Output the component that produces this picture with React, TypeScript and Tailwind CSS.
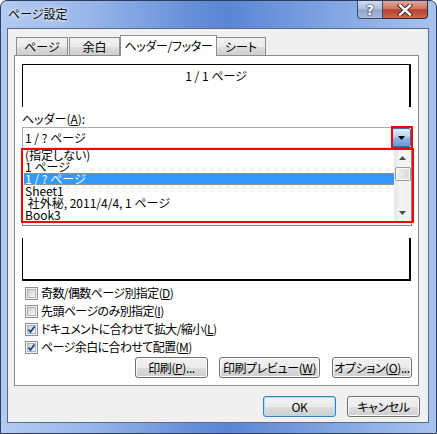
import React from "react";

const F = "font-['Noto_Sans_CJK_JP',sans-serif] [font-feature-settings:'palt']";

const U = ({ c }: { c: string }) => (
  <span className="underline underline-offset-[1px] decoration-[1px]">{c}</span>
);

function Btn({ className, children, focus }: { className: string; children: React.ReactNode; focus?: boolean }) {
  return (
    <div
      className={
        "h-[21px] rounded-[3px] border flex items-center justify-center whitespace-nowrap text-[12px] leading-[12px] tracking-[-0.4px] text-black " +
        (focus
          ? "border-[#3c7fb1] shadow-[inset_0_0_0_1px_#9ee6fb] "
          : "border-[#707070] shadow-[inset_0_0_0_1px_#fbfbfb] ") +
        "bg-[linear-gradient(to_bottom,#f3f3f3_0%,#ebebeb_50%,#dddddd_51%,#cfcfcf_100%)] " +
        className
      }
    >
      {children}
    </div>
  );
}

function Check({ checked, children }: { checked?: boolean; children: React.ReactNode }) {
  return (
    <div className="h-[18px] flex items-center pl-[3px]">
      <div className="w-[13px] h-[13px] border border-[#8e8f8f] bg-[#f4f4f4] flex items-center justify-center">
        <div className="w-[9px] h-[9px] border border-[#b0b4ba] bg-[linear-gradient(135deg,#c8ccd2_0%,#e6e8eb_60%,#fafafa_100%)] relative">
          {checked && (
            <svg width="11" height="11" viewBox="0 0 11 11" className="absolute left-[-2px] top-[-2px]">
              <path d="M2.5 5.5 L4.5 8 L8.5 2.5" stroke="#21409a" strokeWidth="1.8" fill="none" />
            </svg>
          )}
        </div>
      </div>
      <span className="ml-[3px] text-[12px] leading-[12px] tracking-[-0.6px] whitespace-nowrap text-black">{children}</span>
    </div>
  );
}

function Tri({ up, color = "#4a4a4a" }: { up?: boolean; color?: string }) {
  return (
    <svg width="7" height="4" viewBox="0 0 7 4">
      {up ? <path d="M0 4 L3.5 0 L7 4 Z" fill={color} /> : <path d="M0 0 L7 0 L3.5 4 Z" fill={color} />}
    </svg>
  );
}

const items = ["(指定しない)", "1 ページ", "1 / ? ページ", "Sheet1", " 社外秘, 2011/4/4, 1 ページ", "Book3"];

export default function App() {
  return (
    <div className={F + " w-[437px] h-[434px] overflow-hidden bg-white"}>
      <div className="w-[437px] h-[434px] rounded-t-[7px] border border-[#2d3d5e] bg-[linear-gradient(to_right,#b3cbf1_0%,#98b6ea_20%,#6a92db_42%,#5a86d6_52%,#7fa3e3_75%,#a9c3ef_100%)] flex flex-col pl-[6px] pr-[7px] pb-[10px]">
        {/* title bar */}
        <div className="h-[27px] flex justify-between items-start">
          <div className="pt-[7px] pl-[1px] text-[12px] leading-[12px] text-black [text-shadow:0_0_6px_#ffffff,0_0_3px_#ffffff]">
            ページ設定
          </div>
          <div className="flex mr-[1px] h-[18px]">
            <div className="w-[26px] h-[18px] rounded-bl-[4px] border border-t-0 border-[#3a4a6a] bg-[linear-gradient(to_bottom,#d0dcef_0%,#adbfdc_48%,#8ea5cb_52%,#a6badb_100%)] flex items-center justify-center">
              <span className="text-[14px] leading-[14px] font-bold text-white font-['DejaVu_Sans',sans-serif] [text-shadow:0_0_1px_#2a3550,0_0_1px_#2a3550,0_0_2px_#2a3550]">?</span>
            </div>
            <div className="w-[45px] h-[18px] rounded-br-[4px] border border-t-0 border-l-0 border-[#3a2a2a] bg-[linear-gradient(to_bottom,#e3a79a_0%,#cf7462_45%,#b8402c_52%,#c86a52_100%)] flex items-center justify-center">
              <svg width="16" height="12" viewBox="0 0 16 12">
                <path d="M3 1.5 L13 10.5 M13 1.5 L3 10.5" stroke="#3b2020" strokeWidth="4.2" strokeLinecap="square" />
                <path d="M3 1.5 L13 10.5 M13 1.5 L3 10.5" stroke="#ffffff" strokeWidth="2.4" strokeLinecap="square" />
              </svg>
            </div>
          </div>
        </div>

        {/* client area */}
        <div className="flex-1 border border-[#5b6b8c] bg-[#f0f0f0] flex flex-col pt-[6px]">
          {/* tabs */}
          <div className="ml-[6px] mr-[9px] flex flex-col">
            <div className="h-[20px] flex items-end pl-[2px] text-[12px] leading-[12px] text-black">
              <div className="w-[52px] h-[18px] border border-b-0 border-[#898c95] bg-[linear-gradient(to_bottom,#f2f2f2_0%,#ebebeb_50%,#dddddd_51%,#cfcfcf_100%)] flex items-center justify-center">
                ページ
              </div>
              <div className="ml-[1px] w-[51px] h-[18px] border border-b-0 border-[#898c95] bg-[linear-gradient(to_bottom,#f2f2f2_0%,#ebebeb_50%,#dddddd_51%,#cfcfcf_100%)] flex items-center justify-center">
                余白
              </div>
              <div className="relative z-10 w-[97px] h-[21px] -mb-[1px] border border-b-0 border-[#898c95] bg-white flex items-center justify-center pb-[1px] tracking-[-0.3px]">
                ヘッダー/フッター
              </div>
              <div className="w-[49px] h-[18px] border border-b-0 border-l-0 border-[#898c95] bg-[linear-gradient(to_bottom,#f2f2f2_0%,#ebebeb_50%,#dddddd_51%,#cfcfcf_100%)] flex items-center justify-center">
                シート
              </div>
            </div>

            {/* panel */}
            <div className="h-[331px] border border-[#898c95] bg-white pl-[7px] pr-[4px] pt-[8px] text-[12px] leading-[12px] text-black">
              {/* header preview */}
              <div className="w-[389px] h-[43px] border-l border-t border-r-2 border-black flex justify-center pt-[5px]">
                1 / 1 ページ
              </div>
              <div className="mt-[5px] h-[13px] flex items-center">
                ヘッダー(<U c="A" />):
              </div>
              {/* combo */}
              <div className="relative mt-[2px] w-[390px] h-[21px] border border-[#a5acb5] border-b-[#dfe3e8] bg-white flex items-center pl-[2px]">
                <span>1 / ? ページ</span>
                <div className="ml-auto w-[19px] h-[19px] border border-[#3c6fa8] rounded-[2px] bg-[linear-gradient(to_bottom,#e4eefa_0%,#b9d1f0_45%,#8fb3e6_55%,#6a98d8_100%)] flex items-center justify-center">
                  <Tri color="#000000" />
                </div>
                <div className="absolute right-[-2px] top-[-2px] w-[22px] h-[23px] border-2 border-[#ff0000]" />

                {/* dropdown list */}
                <div className="absolute left-[-1px] top-[20px] w-[390px] h-[78px] border border-[#828790] bg-white z-20 flex">
                  <div className="flex-1 flex flex-col pl-[1px]">
                    {items.map((t, i) =>
                      i === 2 ? (
                        <div
                          key={i}
                          className="h-[12px] leading-[12px] bg-[#3399ff] text-white border-y border-dotted border-[#d98c3c] flex items-center whitespace-pre pl-[1px]"
                        >
                          {t}
                        </div>
                      ) : (
                        <div key={i} className="h-[12px] leading-[12px] flex items-center whitespace-pre pl-[1px]">
                          {t}
                        </div>
                      )
                    )}
                  </div>
                  <div className="w-[17px] h-[72px] bg-[linear-gradient(to_right,#e6e6e6,#f4f4f4_40%,#f0f0f0)] flex flex-col items-center">
                    <div className="h-[17px] flex items-center justify-center">
                      <Tri up />
                    </div>
                    <div className="w-[16px] h-[14px] mt-[1px] rounded-[2px] border border-[#9b9b9b] bg-[linear-gradient(to_right,#f3f3f3,#e4e4e4_50%,#d8d8d8)] shadow-[inset_0_0_0_1px_#fbfbfb]" />
                    <div className="flex-1" />
                    <div className="h-[17px] flex items-center justify-center">
                      <Tri />
                    </div>
                  </div>
                </div>
                <div className="absolute left-[-2px] top-[20px] w-[393px] h-[75px] border-2 border-[#ff0000] z-30" />
              </div>

              {/* footer controls area (covered by list) */}
              <div className="h-[90px]" />

              {/* footer preview */}
              <div className="w-[389px] h-[43px] border-l border-b-2 border-r-2 border-black" />

              <div className="mt-[3px] flex flex-col">
                <Check>
                  奇数/偶数ページ別指定(<U c="D" />)
                </Check>
                <Check>
                  先頭ページのみ別指定(<U c="I" />)
                </Check>
                <Check checked>
                  ドキュメントに合わせて拡大/縮小(<U c="L" />)
                </Check>
                <Check checked>
                  ページ余白に合わせて配置(<U c="M" />)
                </Check>
              </div>

              <div className="mt-[1px] flex justify-end pr-[2px] gap-[11px]">
                <Btn className="w-[73px]">
                  印刷(<U c="P" />)...
                </Btn>
                <Btn className="w-[101px]">
                  印刷プレビュー(<U c="W" />)
                </Btn>
                <Btn className="ml-[1px] w-[80px]">
                  オプション(<U c="O" />)...
                </Btn>
              </div>
            </div>
          </div>

          {/* OK / Cancel */}
          <div className="mt-[10px] mr-[8px] flex justify-end gap-[11px]">
            <Btn className="w-[73px]" focus>
              OK
            </Btn>
            <Btn className="w-[73px]">キャンセル</Btn>
          </div>
        </div>
      </div>
    </div>
  );
}
